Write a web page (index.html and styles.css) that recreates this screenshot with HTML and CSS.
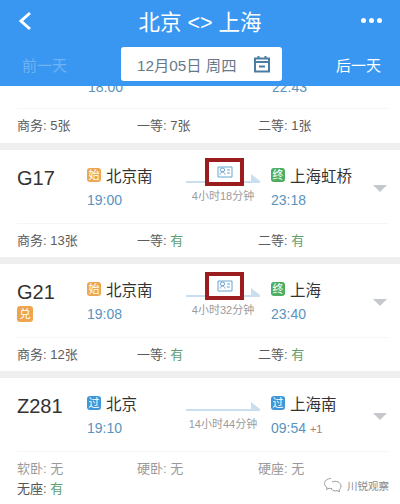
FILE: index.html
```html
<!DOCTYPE html>
<html lang="zh-CN">
<head>
  <meta charset="UTF-8">
  <title>北京 <> 上海</title>
  <link rel="stylesheet" href="styles.css">
</head>
<body>
  <div class="header">
    <div class="nav">
      <svg class="back" width="16" height="22" viewBox="0 0 16 22"><path d="M13 3 L4 11 L13 19" fill="none" stroke="#fff" stroke-width="3"/></svg>
      <div class="title">北京 &lt;&gt; 上海</div>
      <div class="more"><i></i><i></i><i></i></div>
    </div>
    <div class="dates">
      <span class="day off">前一天</span>
      <div class="picker">
        <span>12月05日 周四</span>
        <svg width="18" height="18" viewBox="0 0 18 18"><path d="M2 3.500 H16 V16.500 H2 Z M2 7 H16 M5.500 1 V4.500 M12.500 1 V4.500 M6 11.500 H12" fill="none" stroke="#4a7da3" stroke-width="2"/></svg>
      </div>
      <span class="day">后一天</span>
    </div>
  </div>

  <div class="list">
    <div class="card first">
      <div class="times">
        <span class="time t1">18:00</span>
        <span class="time t2">22:43</span>
      </div>
      <div class="seats">
        <span>商务: 5张</span>
        <span>一等: 7张</span>
        <span>二等: 1张</span>
      </div>
    </div>

    <div class="card">
      <div class="main">
        <div class="train">G17</div>
        <div class="stop">
          <div class="name"><b class="tag orange">始</b>北京南</div>
          <div class="time">19:00</div>
        </div>
        <div class="trip">
          <div class="line"></div>
          <div class="dur">4小时18分钟</div>
          <div class="mark"><svg width="16" height="12" viewBox="0 0 16 12"><path d="M1 1 H15 V11 H1 Z M8 8.500 C8 5.500 3 5.500 3 8.500 M5.500 5.500 A1.700 1.700 0 1 1 5.500 2.200 A1.700 1.700 0 1 1 5.500 5.500 M10 4 H13 M10 7 H13" fill="none" stroke="#6ba5cf" stroke-width="1"/></svg></div>
        </div>
        <div class="stop">
          <div class="name"><b class="tag green">终</b>上海虹桥</div>
          <div class="time">23:18</div>
        </div>
        <div class="caret"></div>
      </div>
      <div class="seats">
        <span>商务: 13张</span>
        <span>一等: <em>有</em></span>
        <span>二等: <em>有</em></span>
      </div>
    </div>

    <div class="card">
      <div class="main">
        <div class="train">G21<b class="tag orange swap">兑</b></div>
        <div class="stop">
          <div class="name"><b class="tag orange">始</b>北京南</div>
          <div class="time">19:08</div>
        </div>
        <div class="trip">
          <div class="line"></div>
          <div class="dur">4小时32分钟</div>
          <div class="mark"><svg width="16" height="12" viewBox="0 0 16 12"><path d="M1 1 H15 V11 H1 Z M8 8.500 C8 5.500 3 5.500 3 8.500 M5.500 5.500 A1.700 1.700 0 1 1 5.500 2.200 A1.700 1.700 0 1 1 5.500 5.500 M10 4 H13 M10 7 H13" fill="none" stroke="#6ba5cf" stroke-width="1"/></svg></div>
        </div>
        <div class="stop">
          <div class="name"><b class="tag green">终</b>上海</div>
          <div class="time">23:40</div>
        </div>
        <div class="caret"></div>
      </div>
      <div class="seats">
        <span>商务: 12张</span>
        <span>一等: <em>有</em></span>
        <span>二等: <em>有</em></span>
      </div>
    </div>

    <div class="card last">
      <div class="main">
        <div class="train">Z281</div>
        <div class="stop">
          <div class="name"><b class="tag blue">过</b>北京</div>
          <div class="time">19:10</div>
        </div>
        <div class="trip">
          <div class="line"></div>
          <div class="dur">14小时44分钟</div>
        </div>
        <div class="stop">
          <div class="name"><b class="tag blue">过</b>上海南</div>
          <div class="time">09:54 <small>+1</small></div>
        </div>
        <div class="caret"></div>
      </div>
      <div class="seats none">
        <span>软卧: 无</span>
        <span>硬卧: 无</span>
        <span>硬座: 无</span>
        <span class="have">无座: <em>有</em></span>
      </div>
    </div>
  </div>

  <div class="watermark">
    <svg width="20" height="16" viewBox="0 0 20 16"><path d="M8 1.500 C4 1.500 1.500 4 1.500 6.500 C1.500 8.500 2.500 9.500 4 10.500 L3.500 12.500 L6 11.200 C7 11.500 8 11.500 9 11.500 M9 5 C13 3 18 5.500 18 9 C18 11 17 12 16 13 L16.500 14.800 L14.300 13.700 C12 14.300 9.500 13.800 8.500 12" fill="none" stroke="#9a9a9a" stroke-width="1"/></svg>
    <span>川锐观察</span>
  </div>
</body>
</html>
```

FILE: styles.css
```css
* {
  box-sizing: border-box;
}
body {
  margin: 0;
  height: 504px;
  overflow: hidden;
  position: relative;
  background: #efefef;
  font-family: "Liberation Sans", "Noto Sans CJK SC", sans-serif;
  color: #333;
}
.header {
  position: relative;
  z-index: 1;
  height: 86px;
  background: #3a97f1;
  color: #fff;
}
.nav {
  height: 47px;
  padding: 0 18px 0 17px;
  display: flex;
  align-items: center;
  justify-content: space-between;
}
.back {
  margin-top: -5px;
}
.title {
  margin: -6px 0 0 6px;
  font-size: 21.500px;
}
.more {
  display: flex;
  gap: 3px;
  margin-top: -6px;
}
.more i {
  width: 5px;
  height: 5px;
  border-radius: 50%;
  background: #fff;
}
.dates {
  height: 34px;
  display: flex;
  align-items: center;
  justify-content: space-between;
  padding: 0 19px 0 22px;
}
.day {
  font-size: 15px;
}
.day.off {
  color: #6fb3f4;
}
.picker {
  width: 161px;
  height: 34px;
  padding: 0 11px 0 16px;
  display: flex;
  align-items: center;
  justify-content: space-between;
  background: #fff;
  border-radius: 3px;
  font-size: 15.300px;
  color: #67798a;
}
.card {
  background: #fff;
  margin-bottom: 7px;
  height: 107px;
  padding: 0 12px 0 17px;
}
.card.first {
  height: 57px;
  overflow: hidden;
}
.card.last {
  margin-bottom: 0;
  height: 126px;
}
.times {
  display: flex;
  height: 35px;
  margin-top: -12px;
  border-bottom: 1px solid #f6f6f6;
}
.t1 {
  margin-left: 71px;
}
.t2 {
  margin-left: 149px;
}
.main {
  height: 74px;
  padding-top: 13px;
  display: flex;
  border-bottom: 1px solid #f6f6f6;
}
.train {
  flex: none;
  width: 70px;
  padding-top: 3px;
  font-size: 20px;
  line-height: 24px;
  color: #333;
}
.stop {
  flex: none;
  width: 99px;
}
.trip + .stop {
  width: 102px;
}
.name {
  display: flex;
  align-items: center;
  height: 24px;
  font-size: 15.500px;
  color: #333;
}
.tag {
  flex: none;
  width: 14px;
  height: 14px;
  margin-right: 5px;
  border-radius: 3px;
  font-size: 11px;
  font-weight: normal;
  line-height: 14px;
  text-align: center;
  color: #fff;
}
.orange {
  background: #eda64f;
}
.green {
  background: #4dae62;
}
.blue {
  background: #3f96d8;
}
.train .swap {
  display: block;
  width: 16px;
  height: 16px;
  line-height: 16px;
  margin-top: 2px;
}
.time {
  margin-top: 2px;
  font-size: 14px;
  line-height: 22px;
  color: #5a93bd;
}
.time small {
  font-size: 11px;
  color: #b5766f;
}
.trip {
  flex: none;
  position: relative;
  width: 85px;
  padding-top: 18px;
}
.line {
  position: relative;
  height: 2px;
  width: 74px;
  background: #c9dff0;
}
.line::after {
  content: "";
  position: absolute;
  right: 0;
  top: -7px;
  border-left: 9px solid #c9dff0;
  border-top: 7px solid transparent;
}
.dur {
  width: 74px;
  margin-top: 6px;
  font-size: 11px;
  line-height: 14px;
  text-align: center;
  white-space: nowrap;
  color: #9b9b9b;
}
/* 红框标记 */
.mark {
  position: absolute;
  left: 19px;
  top: -5px;
  width: 39px;
  height: 28px;
  border: 4px solid #9a1c1f;
  background: #fff;
  display: flex;
  align-items: center;
  justify-content: center;
}
.caret {
  flex: none;
  margin-top: 22px;
  width: 14px;
  border-top: 7px solid #c4c8cc;
  border-left: 7px solid transparent;
  border-right: 7px solid transparent;
  height: 0;
}
.seats {
  padding-top: 7px;
  display: grid;
  grid-template-columns: 120px 121px 1fr;
  font-size: 13px;
  line-height: 20px;
  color: #5c5c5c;
}
.seats em {
  font-style: normal;
  color: #5d9e6c;
}
.seats.none {
  color: #9a9a9a;
}
.seats .have {
  color: #555;
}
.watermark {
  position: absolute;
  right: 11px;
  bottom: 11px;
  display: flex;
  align-items: center;
  gap: 4px;
  font-size: 10.500px;
  color: #8a8a8a;
}
```
